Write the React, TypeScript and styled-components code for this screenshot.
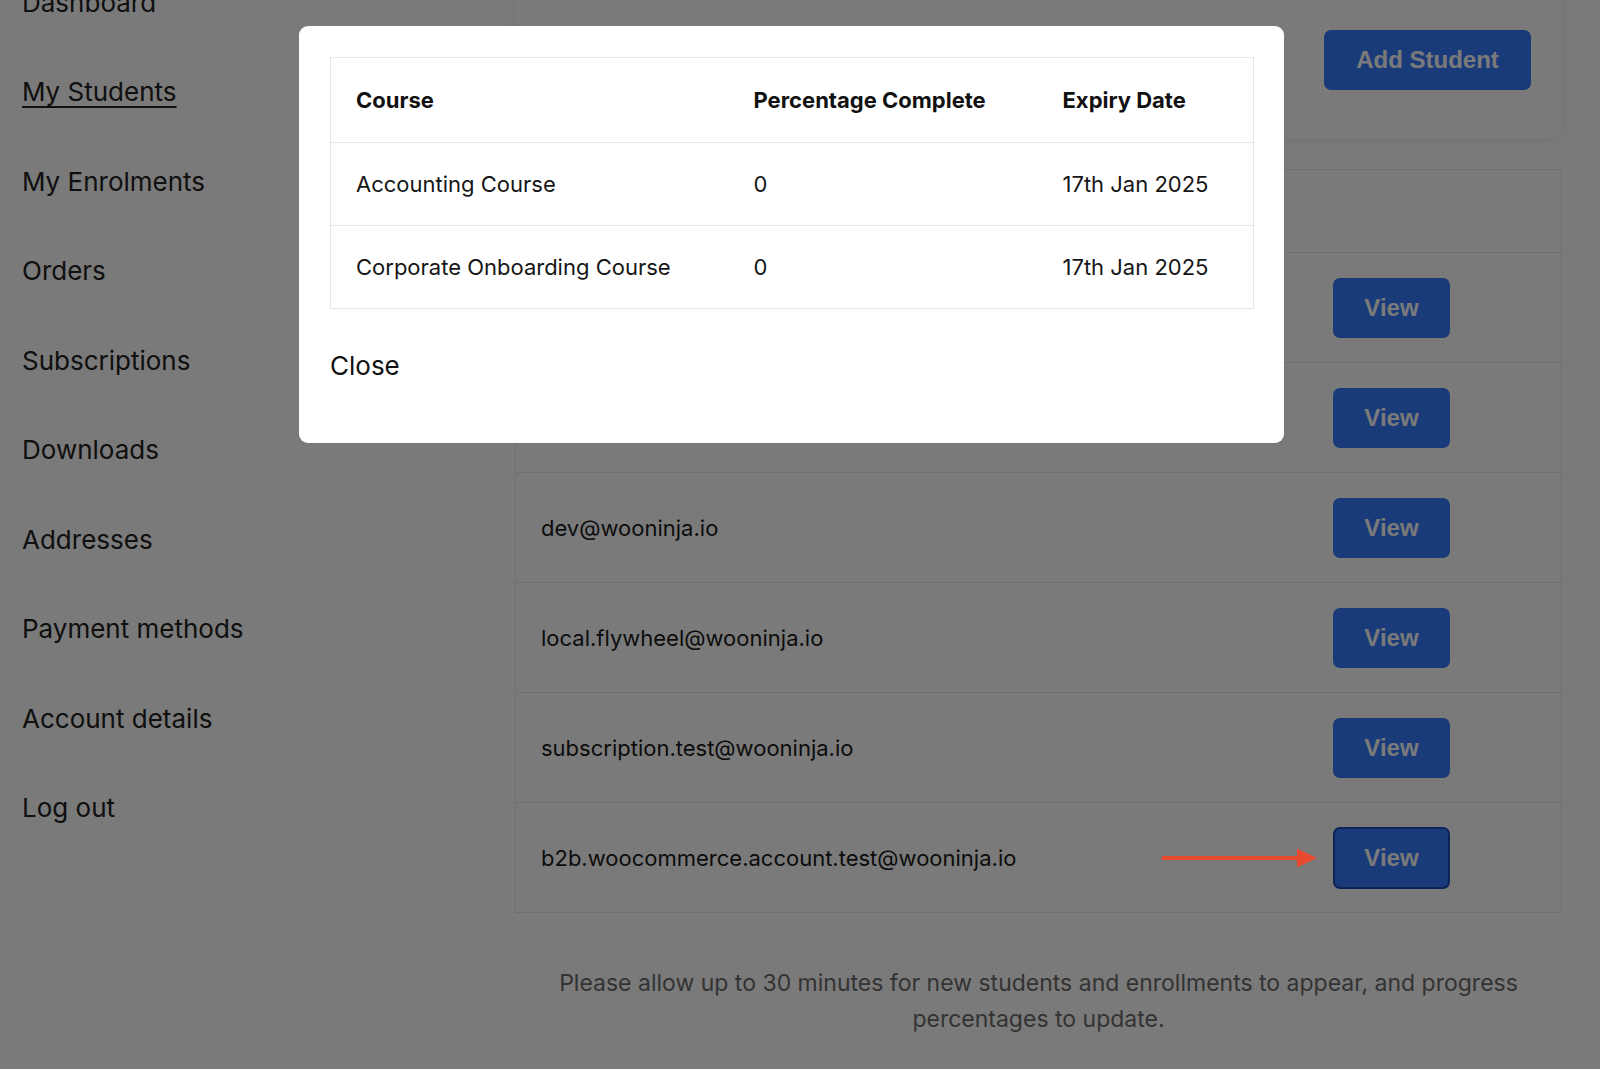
import React from "react";
import styled, { createGlobalStyle } from "styled-components";

const GlobalStyle = createGlobalStyle`
  html, body { margin: 0; padding: 0; background: #ffffff; overflow: hidden; }
  body { font-family: Inter, "Noto Sans", sans-serif; color: #222222; }
  * { box-sizing: border-box; }
`;

const Page = styled.div`
  display: grid;
  grid-template-columns: 515px 1047px;
  margin-top: -42px;
  height: 1111px;
`;

const Sidebar = styled.nav`
  display: flex;
  flex-direction: column;
  padding-left: 22px;
`;

const NavItem = styled.a<{ $active?: boolean }>`
  display: block;
  font-size: 26px;
  line-height: 32px;
  padding: 28.75px 0;
  color: #222222;
  text-decoration: ${(p) => (p.$active ? "underline" : "none")};
  text-decoration-thickness: 1.5px;
  text-underline-offset: 5px;
  cursor: pointer;
`;

const Main = styled.main`
  display: flex;
  flex-direction: column;
`;

const HeaderCard = styled.div`
  display: flex;
  justify-content: flex-end;
  padding: 72px 31px 48px;
  background: #ffffff;
  border-radius: 0 0 14px 14px;
  box-shadow: 0 4px 14px rgba(0, 0, 0, 0.06);
`;

const PrimaryButton = styled.button<{ $w: number; $focused?: boolean }>`
  width: ${(p) => p.$w}px;
  height: ${(p) => (p.$focused ? 62 : 60)}px;
  font-family: "Liberation Sans", Arial, sans-serif;
  font-weight: 700;
  font-size: 24px;
  color: #ffffff;
  background: #387cff;
  border: 2px solid ${(p) => (p.$focused ? "#1c4dba" : "#387cff")};
  border-radius: 7px;
  padding: 0;
  cursor: pointer;
`;

const StudentList = styled.div`
  margin-top: 31px;
  border: 1px solid #e8e8e8;
  border-bottom: none;
`;

const ListHeader = styled.div`
  height: 83px;
  display: flex;
  align-items: center;
  padding: 0 26px;
  font-size: 22px;
  font-weight: 700;
  color: #111111;
  border-bottom: 1px solid #e8e8e8;
`;

const StudentRow = styled.div`
  height: 110px;
  display: flex;
  align-items: center;
  justify-content: space-between;
  padding: 0 111px 0 25px;
  border-bottom: 1px solid #e8e8e8;
`;

const Email = styled.span`
  font-size: 22px;
  color: #1a1a1a;
`;

const Note = styled.p`
  margin: 52px 0 0;
  text-align: center;
  font-size: 23px;
  line-height: 36px;
  color: #6c6c6c;
`;

const Overlay = styled.div`
  position: fixed;
  inset: 0;
  background: rgba(0, 0, 0, 0.52);
  z-index: 10;
  display: flex;
  align-items: flex-start;
  padding: 26px 0 0 299px;
`;

const Modal = styled.div`
  width: 985px;
  background: #ffffff;
  border-radius: 9px;
  padding: 31px 31px 61px;
  display: flex;
  flex-direction: column;
  align-items: flex-start;
`;

const CourseTable = styled.table`
  width: 923px;
  border-collapse: collapse;
  table-layout: fixed;
  border: 1px solid #e6e6e6;
`;

const HeadCell = styled.th`
  height: 85px;
  padding: 0 25px;
  text-align: left;
  font-size: 22px;
  font-weight: 700;
  color: #111111;
  border-bottom: 1px solid #e6e6e6;
`;

const Cell = styled.td`
  height: 83px;
  padding: 0 25px;
  font-size: 22px;
  color: #161616;
  border-bottom: 1px solid #e6e6e6;
`;

const CloseButton = styled.button`
  margin-top: 41px;
  padding: 0;
  border: none;
  background: none;
  font-family: Inter, "Noto Sans", sans-serif;
  font-size: 26px;
  line-height: 32px;
  color: #111111;
  cursor: pointer;
`;

const Pointer = styled.svg`
  position: fixed;
  left: 1160px;
  top: 846px;
  z-index: 20;
`;

const navItems = [
  "Dashboard",
  "My Students",
  "My Enrolments",
  "Orders",
  "Subscriptions",
  "Downloads",
  "Addresses",
  "Payment methods",
  "Account details",
  "Log out",
];

const students = [
  "admin@wooninja.io",
  "support@wooninja.io",
  "dev@wooninja.io",
  "local.flywheel@wooninja.io",
  "subscription.test@wooninja.io",
  "b2b.woocommerce.account.test@wooninja.io",
];

const courses = [
  { name: "Accounting Course", pct: "0", expiry: "17th Jan 2025" },
  { name: "Corporate Onboarding Course", pct: "0", expiry: "17th Jan 2025" },
];

export default function App() {
  return (
    <>
      <GlobalStyle />
      <Page>
        <Sidebar>
          {navItems.map((n) => (
            <NavItem key={n} $active={n === "My Students"}>
              {n}
            </NavItem>
          ))}
        </Sidebar>
        <Main>
          <HeaderCard>
            <PrimaryButton $w={207}>Add Student</PrimaryButton>
          </HeaderCard>
          <StudentList>
            <ListHeader>Email</ListHeader>
            {students.map((s, i) => (
              <StudentRow key={s}>
                <Email>{s}</Email>
                <PrimaryButton $w={117} $focused={i === students.length - 1}>
                  View
                </PrimaryButton>
              </StudentRow>
            ))}
          </StudentList>
          <Note>
            Please allow up to 30 minutes for new students and enrollments to appear, and progress
            <br />
            percentages to update.
          </Note>
        </Main>
      </Page>
      <Overlay>
        <Modal>
          <CourseTable>
            <colgroup>
              <col style={{ width: 398 }} />
              <col style={{ width: 309 }} />
              <col style={{ width: 216 }} />
            </colgroup>
            <thead>
              <tr>
                <HeadCell>Course</HeadCell>
                <HeadCell>Percentage Complete</HeadCell>
                <HeadCell>Expiry Date</HeadCell>
              </tr>
            </thead>
            <tbody>
              {courses.map((c) => (
                <tr key={c.name}>
                  <Cell>{c.name}</Cell>
                  <Cell>{c.pct}</Cell>
                  <Cell>{c.expiry}</Cell>
                </tr>
              ))}
            </tbody>
          </CourseTable>
          <CloseButton>Close</CloseButton>
        </Modal>
      </Overlay>
      <Pointer width="160" height="24" viewBox="0 0 160 24">
        <rect x="2" y="10" width="138" height="4" fill="#e84a2f" />
        <polygon points="137,2.5 157,12 137,21.5" fill="#e84a2f" />
      </Pointer>
    </>
  );
}
